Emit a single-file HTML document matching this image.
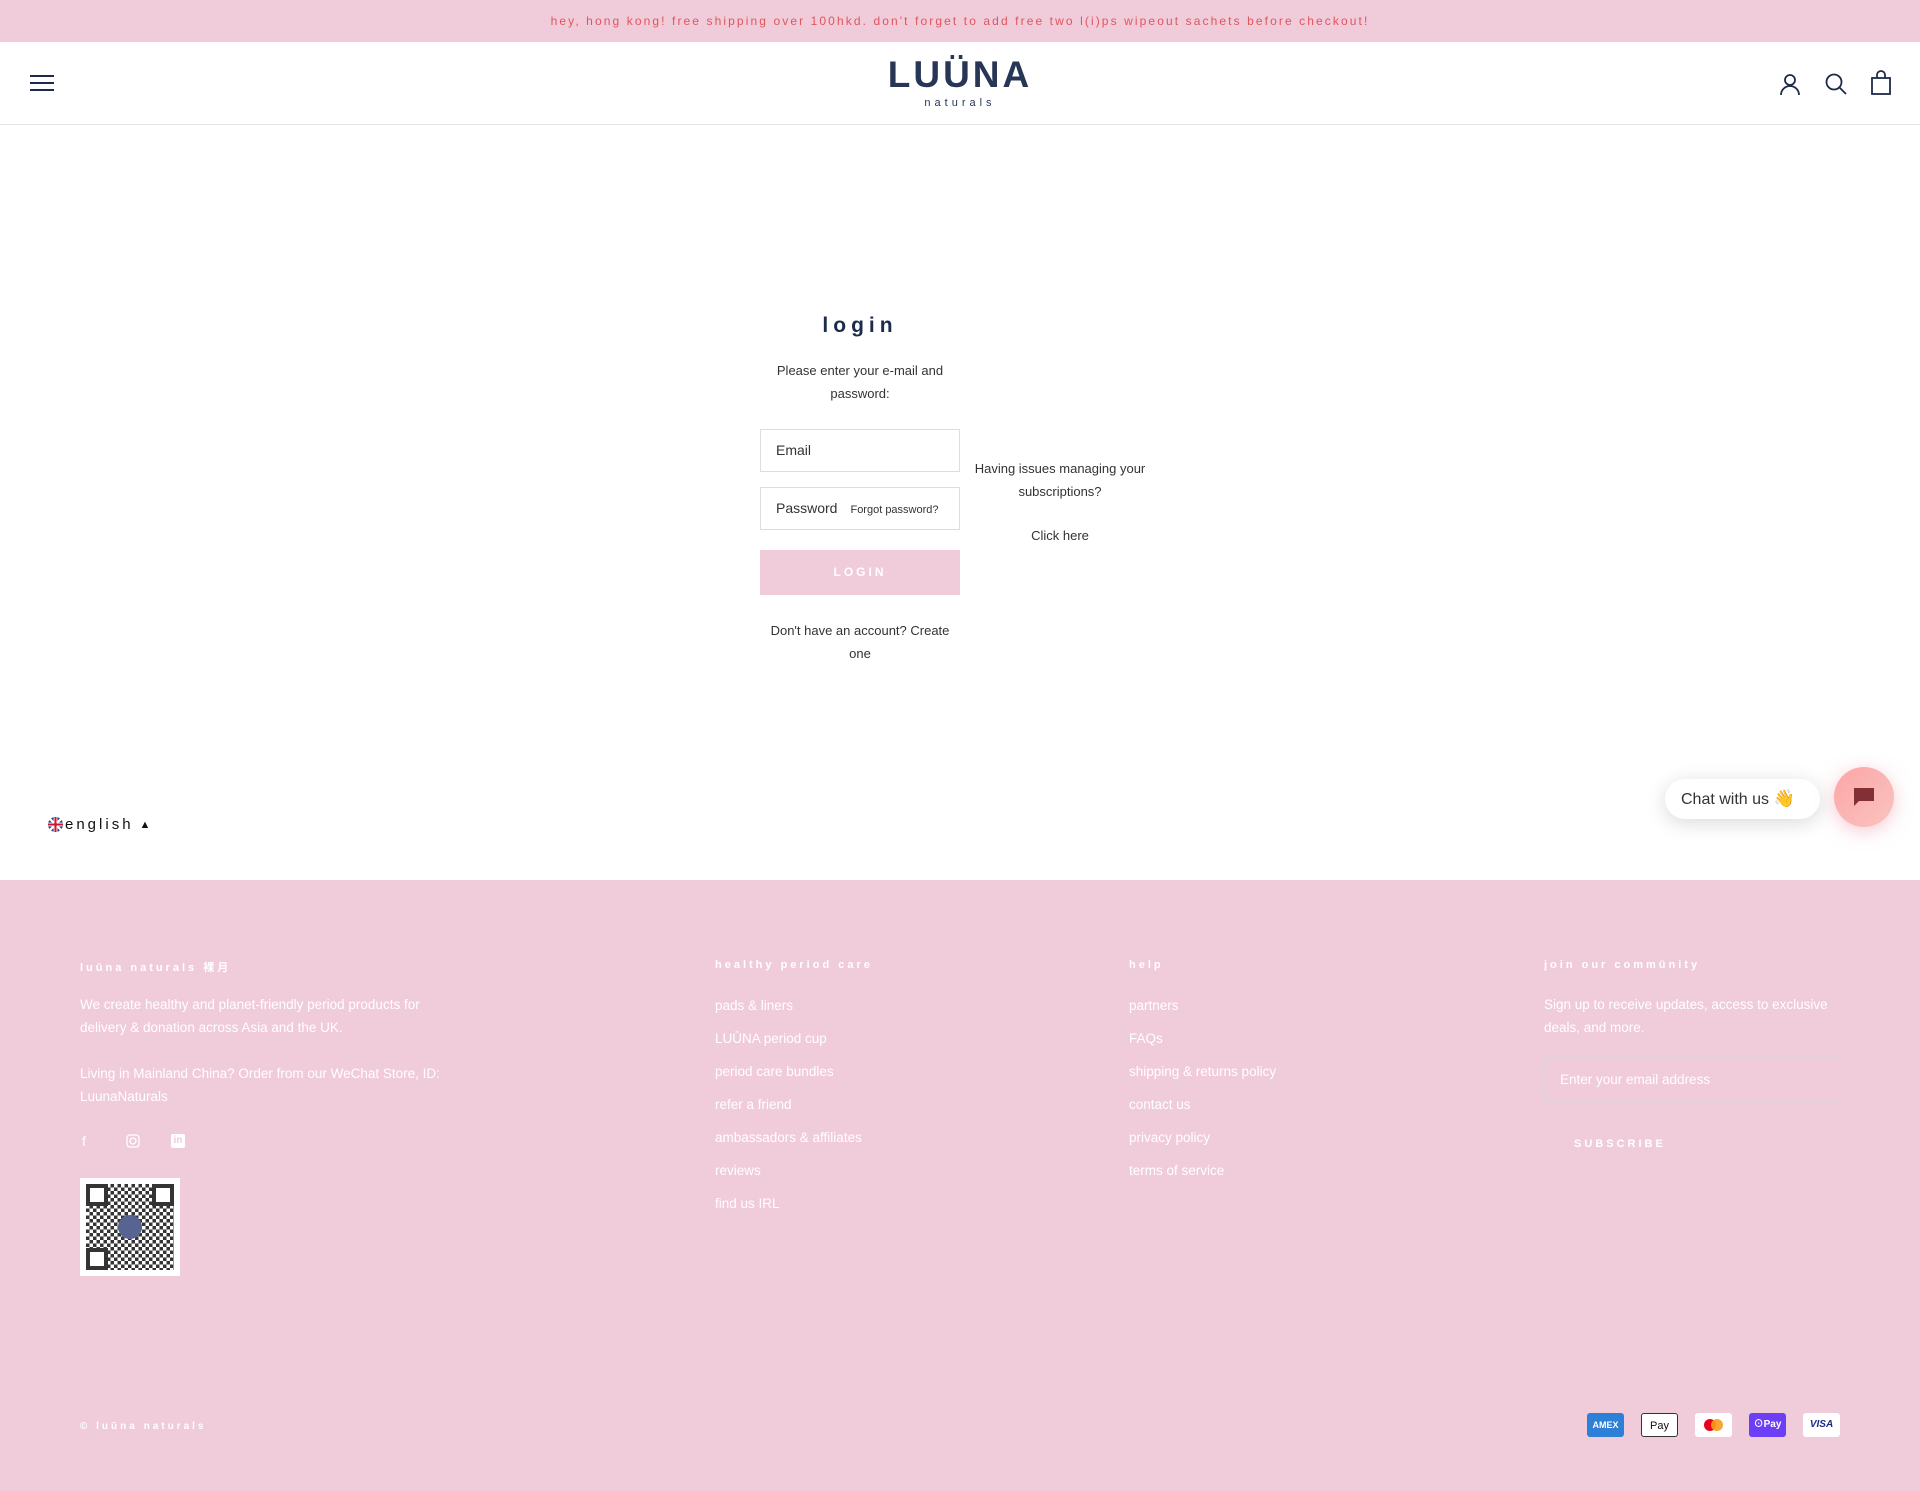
<!DOCTYPE html>
<html><head><meta charset="utf-8">
<style>
*{margin:0;padding:0;box-sizing:border-box}
body{width:1920px;height:1491px;position:relative;background:#fff;font-family:"Liberation Sans","Noto Sans CJK SC",sans-serif;color:#1c2b4a;overflow:hidden}
.a{position:absolute}
.topbar{left:0;top:0;width:1920px;height:42px;background:#f0cbd9;text-align:center;font-size:12px;line-height:42px;color:#e0565e;letter-spacing:2.1px}
.header{left:0;top:42px;width:1920px;height:83px;border-bottom:1px solid #e4e4e4;background:#fff}
.c{text-align:center}
.inp{border:1px solid #ddd;background:#fff;font-size:14px;color:#333;padding-left:15px;line-height:40px}
.foot{left:0;top:880px;width:1920px;height:611px;background:#f0cbd9;color:#fff}
.fh{font-size:11px;font-weight:bold;letter-spacing:3px;color:#fff}
.ft{font-size:13.5px;color:#fff;line-height:23px}
.fl{font-size:13.5px;color:#fff}
.pay{width:37px;height:24px;border-radius:3px;font-size:10px;font-weight:bold;text-align:center;line-height:24px}
</style></head><body>
<div class="a topbar">hey, hong kong! free shipping over 100hkd. don't forget to add free two l(i)ps wipeout sachets before checkout!</div>
<div class="a header">
  <div class="a" style="left:30px;top:33px;width:24px;height:16px">
    <div style="height:2px;background:#1c2b4a;margin-bottom:5px"></div><div style="height:2px;background:#1c2b4a;margin-bottom:5px"></div><div style="height:2px;background:#1c2b4a"></div>
  </div>
  <div class="a c" style="left:860px;top:14px;width:200px;font-size:37px;font-weight:bold;letter-spacing:3px;color:#283655;line-height:38px">LUÜNA</div>
  <div class="a c" style="left:860px;top:55px;width:200px;font-size:11px;letter-spacing:4px;color:#283655">naturals</div>
  <svg class="a" style="left:1778px;top:30px" width="24" height="24" viewBox="0 0 24 24" fill="none" stroke="#1c2b4a" stroke-width="1.8"><circle cx="12" cy="8" r="5"/><path d="M3 23c0-5 4-9 9-9s9 4 9 9"/></svg>
  <svg class="a" style="left:1824px;top:30px" width="24" height="24" viewBox="0 0 24 24" fill="none" stroke="#1c2b4a" stroke-width="1.8"><circle cx="10" cy="10" r="7.5"/><path d="M15.5 15.5l6.5 6.5"/></svg>
  <svg class="a" style="left:1870px;top:28px" width="22" height="26" viewBox="0 0 22 26" fill="none" stroke="#1c2b4a" stroke-width="1.8"><rect x="2" y="8" width="18" height="16"/><path d="M7 8V5a4 4 0 0 1 8 0v3"/></svg>
</div>

<div class="a c" style="left:760px;top:314px;width:200px;font-size:21px;font-weight:bold;letter-spacing:5px;color:#1c2b4a">login</div>
<div class="a c" style="left:760px;top:359px;width:200px;font-size:13px;line-height:23px;color:#333">Please enter your e-mail and password:</div>
<div class="a inp" style="left:760px;top:429px;width:200px;height:43px">Email</div>
<div class="a inp" style="left:760px;top:487px;width:200px;height:43px">Password<span style="font-size:11px;margin-left:13px">Forgot password?</span></div>
<div class="a c" style="left:760px;top:550px;width:200px;height:45px;background:#f0cbd9;color:#fff;font-size:12px;font-weight:bold;letter-spacing:3px;line-height:45px">LOGIN</div>
<div class="a c" style="left:760px;top:619px;width:200px;font-size:13px;line-height:23px;color:#333">Don't have an account? Create one</div>
<div class="a c" style="left:960px;top:457px;width:200px;font-size:13px;line-height:23px;color:#333">Having issues managing your subscriptions?</div>
<div class="a c" style="left:960px;top:528px;width:200px;font-size:13px;color:#333">Click here</div>

<div class="a" style="left:48px;top:816px;font-size:15px;letter-spacing:3px;color:#111;display:flex;align-items:center">
<svg width="15" height="15" viewBox="0 0 16 16" style="margin-right:2px"><circle cx="8" cy="8" r="8" fill="#1a3a8a"/><path d="M2 2L14 14M14 2L2 14" stroke="#fff" stroke-width="2.5"/><path d="M8 0v16M0 8h16" stroke="#fff" stroke-width="4"/><path d="M8 0v16M0 8h16" stroke="#d0142c" stroke-width="2.2"/></svg>english <span style="font-size:11px;margin-left:6px">▲</span></div>

<div class="a" style="left:1665px;top:779px;width:155px;height:40px;border-radius:20px;background:#fff;box-shadow:0 4px 20px rgba(0,0,0,.15);font-size:16px;color:#333;line-height:40px;padding-left:16px">Chat with us <span style="font-size:17px">👋</span></div>
<div class="a" style="left:1834px;top:767px;width:60px;height:60px;border-radius:50%;background:linear-gradient(135deg,#fca5a5,#f9c4c0);box-shadow:0 4px 18px rgba(240,150,170,.5)">
<svg class="a" style="left:19px;top:20px" width="22" height="20" viewBox="0 0 22 20"><path d="M1 1h20v13H6l-5 5z" fill="#823035"/></svg></div>

<div class="a foot">
  <div class="a fh" style="left:80px;top:79px">luūna naturals 裸月</div>
  <div class="a ft" style="left:80px;top:113px;width:385px">We create healthy and planet-friendly period products for delivery &amp; donation across Asia and the UK.</div>
  <div class="a ft" style="left:80px;top:182px;width:385px">Living in Mainland China? Order from our WeChat Store, ID: LuunaNaturals</div>
  <div class="a" style="left:82px;top:253px;font-size:14px">f</div>
  <svg class="a" style="left:126px;top:254px" width="14" height="14" viewBox="0 0 14 14" fill="none" stroke="#fff" stroke-width="1.3"><rect x="1" y="1" width="12" height="12" rx="3"/><circle cx="7" cy="7" r="3"/></svg>
  <div class="a" style="left:171px;top:254px;width:14px;height:14px;background:#fff;border-radius:2px;color:#f0cbd9;font-size:10px;font-weight:bold;text-align:center;line-height:14px">in</div>
  <div class="a" style="left:80px;top:298px;width:100px;height:98px;background:#fff;padding:6px">
    <div style="width:88px;height:86px;position:relative;background-image:repeating-conic-gradient(#111 0 25%,#fff 0 50%);background-size:7px 7px;opacity:.85">
      <div style="position:absolute;left:0;top:0;width:22px;height:22px;border:4px solid #111;background:#fff"></div>
      <div style="position:absolute;right:0;top:0;width:22px;height:22px;border:4px solid #111;background:#fff"></div>
      <div style="position:absolute;left:0;bottom:0;width:22px;height:22px;border:4px solid #111;background:#fff"></div>
      <div style="position:absolute;left:32px;top:31px;width:24px;height:24px;border-radius:50%;background:#3a4a80"></div>
    </div>
  </div>
  <div class="a fh" style="left:715px;top:79px">healthy period care</div>
  <div class="a fl" style="left:715px;top:109px;line-height:33px">pads &amp; liners<br>LUŪNA period cup<br>period care bundles<br>refer a friend<br>ambassadors &amp; affiliates<br>reviews<br>find us IRL</div>
  <div class="a fh" style="left:1129px;top:79px">help</div>
  <div class="a fl" style="left:1129px;top:109px;line-height:33px">partners<br>FAQs<br>shipping &amp; returns policy<br>contact us<br>privacy policy<br>terms of service</div>
  <div class="a fh" style="left:1544px;top:79px">join our commūnity</div>
  <div class="a ft" style="left:1544px;top:113px;width:300px">Sign up to receive updates, access to exclusive deals, and more.</div>
  <div class="a" style="left:1544px;top:178px;width:296px;height:43px;border:1px solid #e0d4dc;font-size:13.5px;color:#fff;line-height:41px;padding-left:15px">Enter your email address</div>
  <div class="a fh" style="left:1574px;top:258px">SUBSCRIBE</div>
  <div class="a fh" style="left:80px;top:541px;font-size:10px">© luūna naturals</div>
  <div class="a pay" style="left:1587px;top:533px;background:#2e7fd6;color:#fff;font-size:9px">AMEX</div>
  <div class="a pay" style="left:1641px;top:533px;background:#fff;border:1px solid #333;color:#111;font-size:11px;font-weight:normal"> Pay</div>
  <div class="a pay" style="left:1695px;top:533px;background:#fff"><span style="display:inline-block;width:12px;height:12px;border-radius:50%;background:#eb001b;margin-top:6px"></span><span style="display:inline-block;width:12px;height:12px;border-radius:50%;background:#f79e1b;margin-left:-5px;opacity:.9"></span></div>
  <div class="a pay" style="left:1749px;top:533px;background:#6c3ef5;color:#fff;font-size:10px">⊙Pay</div>
  <div class="a pay" style="left:1803px;top:533px;background:#fff;color:#1a2a8a;font-style:italic">VISA</div>
</div>
</body></html>
